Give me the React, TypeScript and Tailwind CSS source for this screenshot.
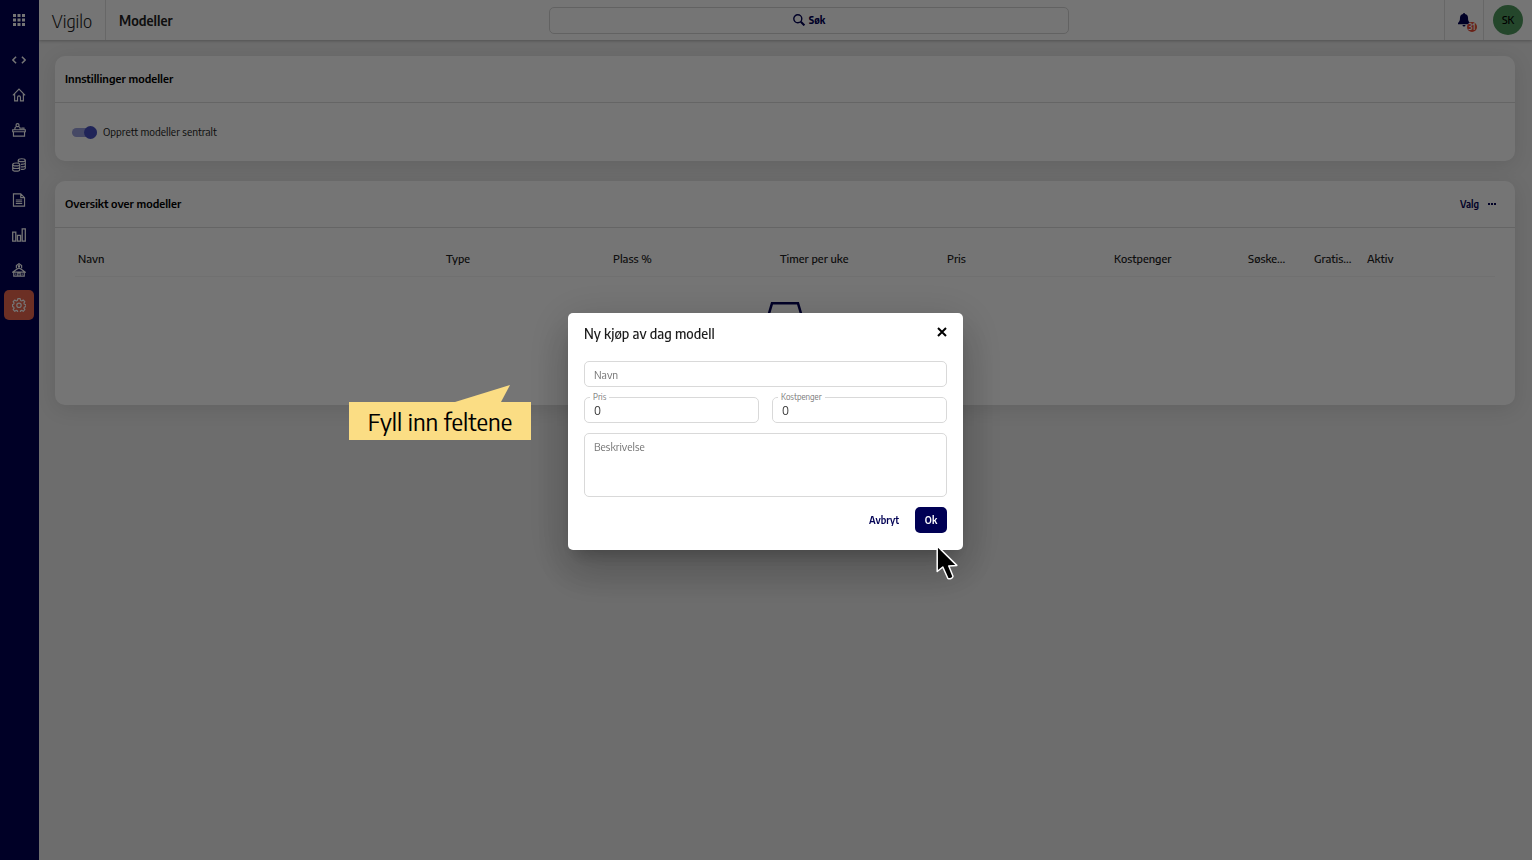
import React from "react";

function Icon({ children }: { children: React.ReactNode }) {
  return (
    <svg viewBox="0 0 24 24" className="size-[14px]" fill="none" stroke="currentColor" strokeWidth="2" aria-hidden="true">
      {children}
    </svg>
  );
}

const navItems: { label: string; icon: React.ReactNode; active?: boolean }[] = [
  {
    label: "Utvikler",
    icon: (
      <Icon>
        <path d="M7 6.500L1.500 12 7 17.500M17 6.500l5.500 5.500-5.500 5.500" strokeWidth="2.600" />
      </Icon>
    ),
  },
  {
    label: "Hjem",
    icon: (
      <Icon>
        <path d="M1.500 12.500L12 2l10.500 10.500M4.500 10v12h5v-6a2.500 2.500 0 0 1 5 0v6h5V10" />
      </Icon>
    ),
  },
  {
    label: "Ansatte",
    icon: (
      <Icon>
        <circle cx="9.500" cy="3.800" r="2.600" />
        <path d="M5 11V9.500a4.500 3.500 0 0 1 9 0V11M17 11V8.500h3.500V11M1.200 11.500h21.600V15H1.200zM2.500 15v7.500h19V15" />
      </Icon>
    ),
  },
  {
    label: "Økonomi",
    icon: (
      <Icon>
        <ellipse cx="16.800" cy="3.800" rx="6" ry="2.500" />
        <path d="M10.800 4v4M22.800 4v13c0 1.500-3 2.500-7.500 2.500M22.800 8.300c0 1.700-3.500 2.500-7.500 2.500M22.800 12.800c0 1.700-3.500 2.500-7.500 2.500" />
        <ellipse cx="7.200" cy="11" rx="6" ry="2.500" />
        <path d="M1.200 11v9c0 1.500 3 2.500 6 2.500s6-1 6-2.500v-9M1.200 15.500c0 1.500 3 2.500 6 2.500s6-1 6-2.500" />
      </Icon>
    ),
  },
  {
    label: "Dokumenter",
    icon: (
      <Icon>
        <path d="M2.500 1.500H15l6.500 6.500v14.500h-19zM15 1.500V8h6.500M6.500 12h11M6.500 15h11M6.500 18h11" />
      </Icon>
    ),
  },
  {
    label: "Statistikk",
    icon: (
      <Icon>
        <path d="M1.200 7h5.300v15.500H1.200zM9.400 12.500h5.200v10H9.400zM17.500 1.500h5.300v21h-5.300z" strokeWidth="2.200" />
      </Icon>
    ),
  },
  {
    label: "Enheter",
    icon: (
      <Icon>
        <path d="M7.500 9V4.500L12 1.200l4.500 3.300V9M1.500 15.500L7.500 11 12 8.500l4.500 2.500 6 4.500zM3 15.500v7h18v-7M10 22.500V17h4v5.500M6.500 18v2M17.500 18v2" />
        <circle cx="12" cy="5.500" r="1" />
      </Icon>
    ),
  },
  {
    label: "Innstillinger",
    active: true,
    icon: (
      <Icon>
        <path
          strokeLinejoin="round"
          d="M10 1.200h4l.7 3 1.900.8 2.600-1.600 2.800 2.800-1.600 2.600.8 1.900 2.600.5v3.600l-2.600.7-.8 1.900 1.600 2.600-2.800 2.800-2.600-1.600-1.900.8-.7 2.800h-4l-.7-2.800-1.900-.8-2.600 1.600L2 20l1.600-2.600-.8-1.900-2-.7v-3.600l2-.5.8-1.900L2 6.200l2.800-2.800L7.400 5l1.900-.8z"
        />
        <circle cx="12" cy="12.500" r="3.800" />
      </Icon>
    ),
  },
];

function Field({ id, label }: { id: string; label: string }) {
  return (
    <div className="relative flex-1">
      <label
        htmlFor={id}
        className="absolute -top-[5px] left-[6px] bg-white px-[3px] font-['Encode_Sans','Noto_Sans',sans-serif] text-[8px] leading-[10px] text-[#757575]"
      >
        {label}
      </label>
      <input
        id={id}
        defaultValue="0"
        className="block h-[26px] w-full rounded-[5px] border border-[#d9d9d9] px-[9px] text-[12px] text-[#333]"
      />
    </div>
  );
}

export default function App() {
  return (
    <div className="flex min-h-screen bg-[#ededed] font-['Encode_Sans_Semi_Condensed','Encode_Sans','Noto_Sans',sans-serif] text-black">
      <nav className="flex w-[39px] shrink-0 flex-col bg-[#000054] pr-px text-white">
        <button aria-label="Apper" className="flex h-[42px] items-center justify-center pb-[2px]">
          <svg viewBox="0 0 12 12" className="size-3" fill="currentColor" aria-hidden="true">
            {[0, 4.5, 9].map((y) => [0, 4.5, 9].map((x) => <rect key={`${x}-${y}`} x={x} y={y} width="3" height="3" />))}
          </svg>
        </button>
        {navItems.map((n) => (
          <a key={n.label} href="#" aria-label={n.label} className="flex h-[35px] items-center justify-center">
            <span className={n.active ? "flex size-[30px] items-center justify-center rounded-[5px] bg-[#ec6650]" : "flex"}>
              {n.icon}
            </span>
          </a>
        ))}
      </nav>

      <div className="flex min-w-0 flex-1 flex-col">
        <header className="flex h-10 items-center bg-white shadow-[0_1px_3px_rgba(0,0,0,0.25)]">
          <div className="flex h-full w-[67px] items-center justify-center border-r border-[#e0e0e0] text-[18px] font-light text-[#222]">
            Vigilo
          </div>
          <h1 className="min-w-0 flex-[444] basis-0 text-[14px] font-semibold text-[#222]">
            <span className="ml-[13px]">Modeller</span>
          </h1>
          <button className="flex h-[27px] flex-[518] basis-0 items-center justify-center gap-1 rounded-[5px] border border-[#d6d6d6] p-0 text-[10px] font-bold text-[#000054]">
            <svg viewBox="0 0 12 12" className="size-3" fill="none" stroke="currentColor" strokeWidth="1.4" aria-hidden="true">
              <circle cx="4.800" cy="4.800" r="4" />
              <path d="M7.800 7.800l3.600 3.600" strokeWidth="2" />
            </svg>
            Søk
          </button>
          <div className="flex-[376] basis-0" />
          <button aria-label="Varsler" className="relative flex h-full w-10 items-center justify-center border-x border-[#e0e0e0] text-[#000054]">
            <svg viewBox="0 0 12 14" className="h-[14px] w-3" fill="currentColor" aria-hidden="true">
              <path d="M6 0c.6 0 1 .4 1 .9C9 1.300 10 2.800 10 4.800c0 3 .7 4 2 5.200v1.300H0V10c1.300-1.200 2-2.200 2-5.200C2 2.800 3 1.300 5 .9 5 .4 5.400 0 6 0zM4.500 12h3a1.500 1.500 0 0 1-3 0z" />
            </svg>
            <span className="absolute top-[22px] right-[6px] flex size-[10px] items-center justify-center rounded-full bg-[#e64a35] text-[8px] leading-none font-semibold text-white">
              31
            </span>
          </button>
          <div className="flex w-12 justify-center">
            <div className="flex size-[30px] items-center justify-center rounded-full bg-[#4f9a5e] text-[11px] font-medium">SK</div>
          </div>
        </header>

        <main className="flex flex-col gap-5 px-4 pt-4 pr-[17px]">
          <section className="rounded-[10px] bg-white shadow-[0_4px_20px_rgba(0,0,0,0.1)]">
            <h2 className="border-b border-[#dcdcdc] px-[10px] py-[14px] font-['Encode_Sans','Noto_Sans',sans-serif] text-[11px] leading-[18px] font-semibold">
              Innstillinger modeller
            </h2>
            <label className="flex h-[58px] items-center gap-[6px] pl-[17px] text-[11px] text-[#222]">
              <span className="relative flex h-[13px] w-[25px] items-center">
                <input type="checkbox" role="switch" defaultChecked className="absolute inset-0 size-full opacity-0" />
                <span className="h-[9px] w-full rounded-full bg-[#9a9fdc]" />
                <span className="absolute right-0 size-[13px] rounded-full bg-[#4650c0]" />
              </span>
              Opprett modeller sentralt
            </label>
          </section>

          <section className="rounded-[10px] bg-white shadow-[0_4px_20px_rgba(0,0,0,0.1)]">
            <div className="flex items-center justify-between border-b border-[#dcdcdc] py-[14px] pr-[19px] pl-[10px]">
              <h2 className="font-['Encode_Sans','Noto_Sans',sans-serif] text-[11px] leading-[18px] font-semibold">
                Oversikt over modeller
              </h2>
              <button className="flex items-center gap-[9px] text-[10px] leading-[18px] font-semibold text-[#000054]">
                Valg
                <svg viewBox="0 0 8 2" className="h-[2px] w-2" fill="currentColor" aria-hidden="true">
                  <rect width="2" height="2" />
                  <rect x="3" width="2" height="2" />
                  <rect x="6" width="2" height="2" />
                </svg>
              </button>
            </div>
            <div className="h-[177px] px-5 pt-[14px]">
              <table className="w-full table-fixed text-left font-['Encode_Sans','Noto_Sans',sans-serif] text-[11px] text-[#222]">
                <thead>
                  <tr className="h-[34px] border-b border-[#f4f4f4] *:pl-[3px] *:font-medium">
                    <th className="w-[368px]">Navn</th>
                    <th className="w-[167px]">Type</th>
                    <th className="w-[167px]">Plass %</th>
                    <th className="w-[167px]">Timer per uke</th>
                    <th className="w-[167px]">Pris</th>
                    <th className="w-[134px]">Kostpenger</th>
                    <th className="w-[66px]">Søske...</th>
                    <th className="w-[53px]">Gratis...</th>
                    <th>Aktiv</th>
                  </tr>
                </thead>
              </table>
              <svg viewBox="0 0 50 40" className="mx-auto mt-6 h-10 w-[50px]" fill="none" stroke="#000054" strokeWidth="2.500" aria-hidden="true">
                <path d="M5 26L12 2.300h26L45 26M5 26v12h40V26H33l-3 5H20l-3-5z" />
              </svg>
            </div>
          </section>
        </main>
      </div>

      <div className="fixed inset-0 flex items-center justify-center bg-black/54 pt-[3px] pr-px">
        <div role="dialog" aria-modal="true" aria-labelledby="dialog-title" className="relative w-[395px]">
          <form
            onSubmit={(e) => e.preventDefault()}
            className="flex flex-col gap-[10px] rounded-[5px] bg-white px-4 pt-[10px] pb-[17px] shadow-[0_11px_15px_-7px_rgba(0,0,0,0.2),0_24px_38px_3px_rgba(0,0,0,0.14),0_9px_46px_8px_rgba(0,0,0,0.12)]"
          >
            <div className="mb-[6px] flex items-start justify-between">
              <h2 id="dialog-title" className="text-[14px] leading-[22px] font-medium text-[#1c1c1c]">
                Ny kjøp av dag modell
              </h2>
              <button type="button" aria-label="Lukk" className="flex h-[18px] items-center">
                <svg viewBox="0 0 10 10" className="size-[10px]" stroke="#000" strokeWidth="2" aria-hidden="true">
                  <path d="M1 1l8 8M9 1L1 9" />
                </svg>
              </button>
            </div>
            <input
              aria-label="Navn"
              placeholder="Navn"
              className="block h-[26px] w-full rounded-[5px] border border-[#d9d9d9] px-[9px] text-[11px] placeholder:text-[#757575]"
            />
            <div className="flex gap-[13px]">
              <Field id="pris" label="Pris" />
              <Field id="kostpenger" label="Kostpenger" />
            </div>
            <textarea
              aria-label="Beskrivelse"
              placeholder="Beskrivelse"
              className="block h-[64px] w-full resize-none rounded-[5px] border border-[#d9d9d9] px-[9px] py-1 text-[11px] leading-[18px] placeholder:text-[#757575]"
            />
            <div className="flex justify-end gap-[6px] text-[10px] font-semibold">
              <button type="button" className="h-[26px] px-[10px] text-[#000054]">
                Avbryt
              </button>
              <button type="submit" className="h-[26px] w-8 rounded-[5px] bg-[#000054] text-white">
                Ok
              </button>
            </div>
          </form>

          <div className="absolute top-[72px] -left-[219px] w-[182px]">
            <svg viewBox="0 0 182 17" className="block h-[17px] w-full" aria-hidden="true">
              <path d="M106 17L161 0l-9 17z" fill="#fbdd84" />
            </svg>
            <p className="bg-[#fbdd84] text-center text-[24px] leading-[38px]">Fyll inn feltene</p>
          </div>

          <svg viewBox="0 0 22 36" className="absolute top-[231px] left-[368px] h-9 w-[22px]" aria-hidden="true">
            <path
              d="M1.200 2v25.500l5.600-4.500 5 11.300c1.800 1.200 5 .2 5.200-2L12.800 22l8-.6z"
              fill="#000"
              stroke="#fff"
              strokeWidth="1.500"
              strokeLinejoin="round"
            />
          </svg>
        </div>
      </div>
    </div>
  );
}
